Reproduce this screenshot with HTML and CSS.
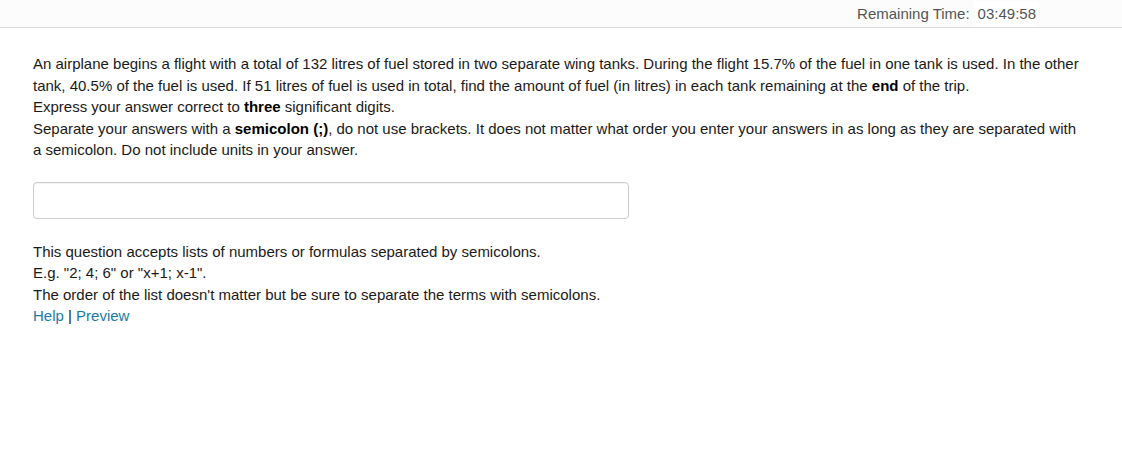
FILE: index.html
```html
<!DOCTYPE html>
<html>
<head>
<meta charset="utf-8">
<link rel="stylesheet" href="styles.css">
</head>
<body>
<header class="topbar">
  <div class="timer">
    <span class="timer-label">Remaining Time:</span>
    <span class="timer-value">03:49:58</span>
  </div>
</header>
<main class="content">
  <div class="question">
    An airplane begins a flight with a total of 132 litres of fuel stored in two separate wing tanks. During the flight 15.7% of the fuel in one tank is used. In the other tank, 40.5% of the fuel is used. If 51 litres of fuel is used in total, find the amount of fuel (in litres) in each tank remaining at the <b>end</b> of the trip.<br>
    Express your answer correct to <b>three</b> significant digits.<br>
    Separate your answers with a <b>semicolon (;)</b>, do not use brackets. It does not matter what order you enter your answers in as long as they are separated with a semicolon. Do not include units in your answer.
  </div>
  <input class="answer" type="text">
  <div class="hint">
    This question accepts lists of numbers or formulas separated by semicolons.<br>
    E.g. "2; 4; 6" or "x+1; x-1".<br>
    The order of the list doesn't matter but be sure to separate the terms with semicolons.<br>
    <a class="link" href="#">Help</a> | <a class="link" href="#">Preview</a>
  </div>
</main>
</body>
</html>
```

FILE: styles.css
```css
html, body {
  margin: 0;
  padding: 0;
  background: #ffffff;
}
body {
  font-family: "Liberation Sans", Arial, sans-serif;
  font-size: 15px;
  color: #1a1a1a;
}
.topbar {
  height: 27px;
  background: #fcfcfc;
  border-bottom: 1px solid #dddddd;
  display: flex;
  justify-content: flex-end;
  align-items: center;
}
.timer {
  display: flex;
  align-items: center;
  margin-right: 84px;
  color: #555555;
  font-size: 15px;
}
.timer-label {
  margin-right: 4px;
}
.timer-value {
  background: #ffffff;
  padding: 4px 2px 4px 4px;
}
.content {
  padding: 0 33px;
}
.question {
  margin-top: 25px;
  line-height: 21.5px;
  max-width: 1050px;
}
.question b {
  color: #000000;
}
.answer {
  display: block;
  box-sizing: border-box;
  margin-top: 21px;
  width: 596px;
  height: 37px;
  border: 1px solid #cccccc;
  border-radius: 4px;
  background: #ffffff;
  box-shadow: inset 0 1px 1px rgba(0,0,0,0.04);
  outline: none;
}
.hint {
  margin-top: 22px;
  line-height: 21.5px;
}
.link {
  color: #1a7ba5;
  text-decoration: none;
}
```
